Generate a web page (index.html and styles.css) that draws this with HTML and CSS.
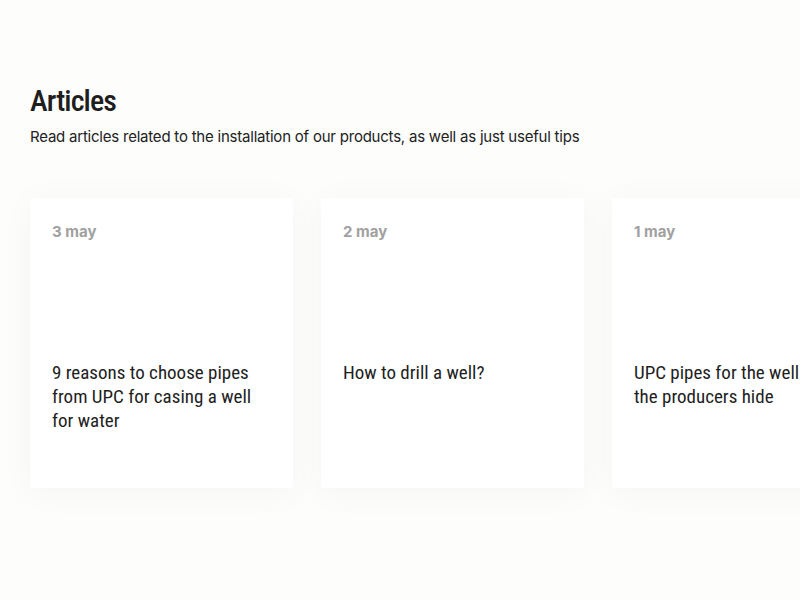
FILE: index.html
```html
<!DOCTYPE html>
<html lang="en">
<head>
<meta charset="utf-8">
<link rel="stylesheet" href="styles.css">
</head>
<body>
<section class="articles">
  <h1 class="articles-title">Articles</h1>
  <p class="articles-lead">Read articles related to the installation of our products, as well as just useful tips</p>
  <div class="cards">
    <article class="card">
      <div class="card-date">3 may</div>
      <h2 class="card-title">9 reasons to choose pipes from UPC for casing a well for water</h2>
    </article>
    <article class="card">
      <div class="card-date">2 may</div>
      <h2 class="card-title">How to drill a well?</h2>
    </article>
    <article class="card">
      <div class="card-date">1 may</div>
      <h2 class="card-title">UPC pipes for the well: what the producers hide</h2>
    </article>
  </div>
</section>
</body>
</html>
```
FILE: styles.css
```css
html, body {
  margin: 0;
  padding: 0;
  background: #fdfdfc;
}
body {
  width: 800px;
  height: 600px;
  overflow: hidden;
  font-family: Inter, "Liberation Sans", sans-serif;
  color: #222;
}
.articles {
  padding: 84px 0 0 30px;
}
.articles-title {
  margin: 0;
  font-family: "Roboto Condensed", "Liberation Sans Narrow", "DejaVu Sans Condensed", sans-serif;
  font-weight: 500;
  font-size: 30px;
  line-height: 34px;
  letter-spacing: -0.9px;
  color: #1e1e1e;
}
.articles-lead {
  margin: 9px 0 0 0;
  font-size: 15px;
  line-height: 20px;
  color: #222;
  letter-spacing: -0.22px;
}
.cards {
  display: flex;
  gap: 28px;
  margin-top: 51px;
  width: 900px;
}
.card {
  flex: 0 0 263px;
  height: 290px;
  box-sizing: border-box;
  background: #fff;
  padding: 24px 22px;
  box-shadow: 0 4px 32px rgba(0, 0, 0, 0.04);
}
.card-date {
  font-size: 15px;
  font-weight: 700;
  line-height: 20px;
  color: #a0a0a0;
}
.card-title {
  margin: 119px 0 0 0;
  font-family: "Roboto Condensed", "Liberation Sans Narrow", "DejaVu Sans Condensed", sans-serif;
  font-weight: 400;
  font-size: 19px;
  line-height: 24px;
  color: #1e1e1e;
}
```
